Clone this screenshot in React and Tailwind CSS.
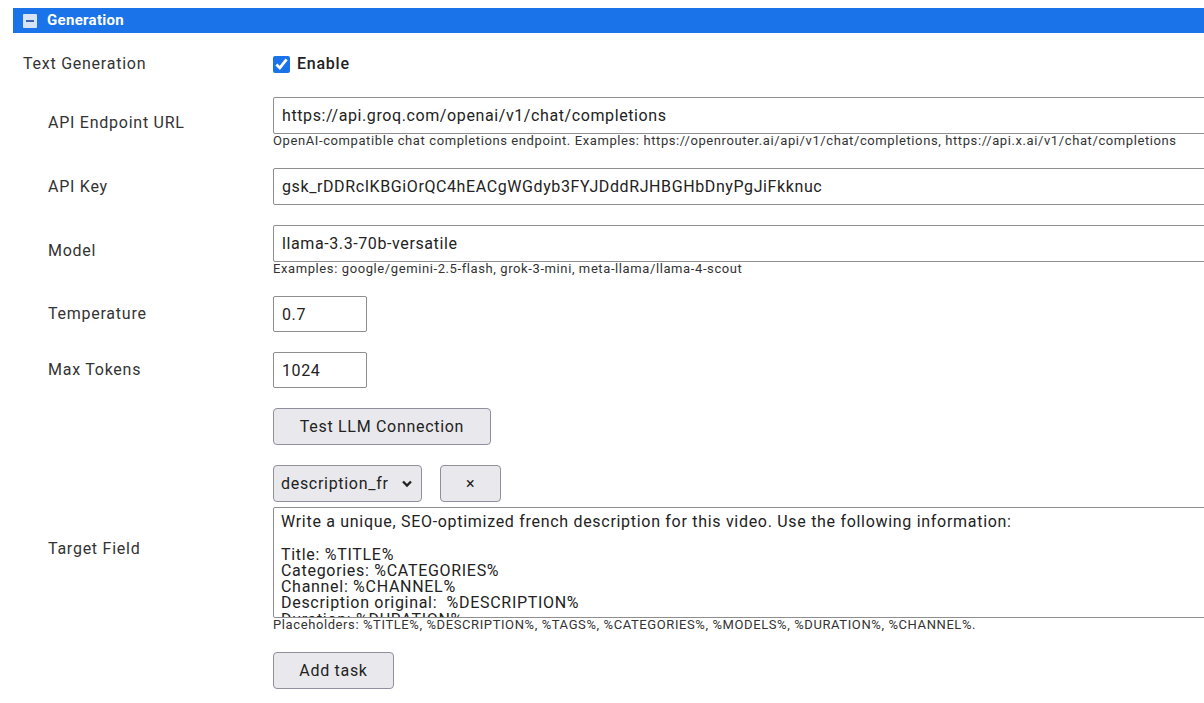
import { useState } from "react";

const promptText = `Write a unique, SEO-optimized french description for this video. Use the following information:

Title: %TITLE%
Categories: %CATEGORIES%
Channel: %CHANNEL%
Description original:  %DESCRIPTION%
Duration: %DURATION%
Models: %MODELS%
Tags: %TAGS%`;

function Row({ label, nested = true, children }) {
  return (
    <div className="grid grid-cols-[260px_1fr] items-center py-[10px]">
      <div className={nested ? "pl-[35px]" : "pl-[10px]"}>{label}</div>
      <div>{children}</div>
    </div>
  );
}

function Help({ children }) {
  return <div className="text-[13px] leading-[14px] tracking-[0.6px] text-[#333] whitespace-nowrap">{children}</div>;
}

export default function App() {
  const [enabled, setEnabled] = useState(true);

  const input = "border border-[#8f8f8f] rounded-[2px] px-[8px] text-[16px] tracking-[0.6px] text-[#222] bg-white outline-none";
  const btn = "h-[37px] bg-[#e9e9ed] border border-[#8f8f9d] rounded-[4px] text-[16px] tracking-[0.7px] text-[#222]";

  return (
    <div className="w-full h-[703px] overflow-hidden bg-white text-[#333] text-[16px] font-['Roboto','Liberation_Sans',sans-serif] tracking-[0.75px]">
      <div className="pt-[8px] pl-[13px]">
        <div className="h-[25px] bg-[#1a73e8] flex items-center pl-[10px] gap-[10px]">
          <span className="w-[14px] h-[14px] bg-[#d9e3f6] rounded-[1px] flex items-center justify-center">
            <span className="w-[8px] h-[2px] bg-[#3a66b0]"></span>
          </span>
          <span className="text-white font-bold text-[15px] tracking-[0.3px]">Generation</span>
        </div>

        <div className="pt-[9px]">
          <Row label="Text Generation" nested={false}>
            <label className="flex items-center gap-[7px] h-[20px]">
              <input
                type="checkbox"
                checked={enabled}
                onChange={(e) => setEnabled(e.target.checked)}
                className="w-[17px] h-[17px] m-0 accent-[#1a73e8]"
              />
              <span className="font-medium text-[#222]">Enable</span>
            </label>
          </Row>

          <div className="pt-[1px]">
            <Row label="API Endpoint URL">
              <input className={`${input} h-[37px] w-[1000px]`} defaultValue="https://api.groq.com/openai/v1/chat/completions" />
              <Help>OpenAI-compatible chat completions endpoint. Examples: https://openrouter.ai/api/v1/chat/completions, https://api.x.ai/v1/chat/completions</Help>
            </Row>
          </div>

          <Row label="API Key">
            <input className={`${input} h-[37px] w-[1000px]`} defaultValue="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" />
          </Row>

          <Row label="Model">
            <input className={`${input} h-[37px] w-[1000px]`} defaultValue="llama-3.3-70b-versatile" />
            <Help>Examples: google/gemini-2.5-flash, grok-3-mini, meta-llama/llama-4-scout</Help>
          </Row>

          <Row label="Temperature">
            <input className={`${input} w-[94px] h-[36px]`} defaultValue="0.7" />
          </Row>

          <Row label="Max Tokens">
            <input className={`${input} w-[94px] h-[36px]`} defaultValue="1024" />
          </Row>

          <Row label="">
            <button className={`${btn} w-[218px]`}>Test LLM Connection</button>
          </Row>

          <Row label="Target Field">
            <div className="flex gap-[18px]">
              <div className={`${btn} w-[149px] flex items-center justify-between pl-[7px] pr-[8px]`}>
                <span>description_fr</span>
                <svg width="12" height="10" viewBox="0 0 12 10">
                  <path d="M2 2.5 L6 6.5 L10 2.5" fill="none" stroke="#222" strokeWidth="2.4" />
                </svg>
              </div>
              <button className={`${btn} w-[61px] text-[13px]`}>×</button>
            </div>
            <textarea
              readOnly
              value={promptText}
              className="mt-[5px] block w-[1000px] h-[111px] border border-[#8f8f8f] rounded-[2px] px-[7px] pt-[6px] text-[16px] leading-[16.3px] tracking-[0.7px] text-[#222] resize-none overflow-hidden outline-none"
            />
            <Help>Placeholders: %TITLE%, %DESCRIPTION%, %TAGS%, %CATEGORIES%, %MODELS%, %DURATION%, %CHANNEL%.</Help>
          </Row>

          <Row label="">
            <button className={`${btn} w-[121px]`}>Add task</button>
          </Row>
        </div>
      </div>
    </div>
  );
}
